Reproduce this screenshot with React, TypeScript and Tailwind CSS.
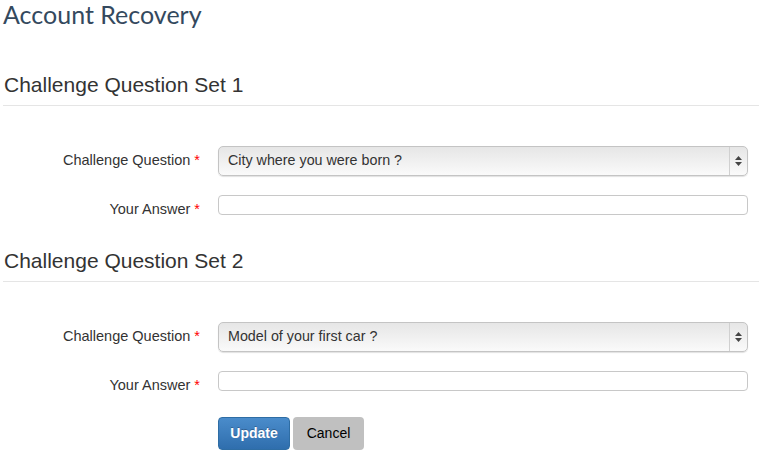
import React from "react";

function Req() {
    return <span className="text-[#ff0000] ml-[4px]">*</span>;
}

function FakeSelect({ value }: { value: string }) {
    return (
        <div className="flex-1 h-[30px] flex items-stretch rounded-[5px] border border-[#c4c4c4] bg-gradient-to-b from-[#e6e6e6] to-[#fafafa] shadow-[0_1px_1px_rgba(0,0,0,0.12)]">
            <div className="flex-1 flex items-center pl-[9px] text-[14.3px] text-[#333]">{value}</div>
            <div className="w-[18px] border-l border-[#d0d0d0] flex flex-col items-center justify-center gap-[2px]">
                <svg width="7" height="4" viewBox="0 0 7 4"><path d="M3.5 0L7 4H0Z" fill="#444" /></svg>
                <svg width="7" height="4" viewBox="0 0 7 4"><path d="M0 0H7L3.5 4Z" fill="#444" /></svg>
            </div>
        </div>
    );
}

function QuestionSet({ title, question }: { title: string; question: string }) {
    return (
        <div>
            <h2 className="text-[21px] leading-[22px] text-[#333] pl-[1px] pb-[9px] border-b border-[#e5e5e5]">{title}</h2>
            <div className="flex items-center mt-[40px] pr-[11px]">
                <label className="w-[198px] text-right text-[14.5px] text-[#333] pr-[1px]">
                    Challenge Question<Req />
                </label>
                <div className="ml-[17px] flex-1 flex">
                    <FakeSelect value={question} />
                </div>
            </div>
            <div className="flex items-start mt-[19px] pr-[11px]">
                <label className="w-[198px] text-right text-[14.5px] leading-[20px] pt-[4px] text-[#333] pr-[1px]">
                    Your Answer<Req />
                </label>
                <input className="ml-[17px] flex-1 h-[20px] rounded-[4px] border border-[#c8c8c8] bg-white outline-none" />
            </div>
        </div>
    );
}

export default function App() {
    return (
        <div className="w-[759px] h-[459px] bg-white pl-[3px] font-['Liberation_Sans',Arial,sans-serif]">
            <h1 className="text-[25px] leading-[28px] text-[#34495e] font-['Lato',sans-serif]">Account Recovery</h1>

            <div className="mt-[46px]">
                <QuestionSet title="Challenge Question Set 1" question="City where you were born ?" />
            </div>

            <div className="mt-[31px]">
                <QuestionSet title="Challenge Question Set 2" question="Model of your first car ?" />
            </div>

            <div className="flex gap-[3px] mt-[22px] ml-[215px]">
                <button className="w-[72px] h-[33px] rounded-[4px] border border-[#2e6da4] bg-gradient-to-b from-[#4a8ccb] to-[#2f6ead] text-white text-[14px] font-bold [text-shadow:0_-1px_0_rgba(0,0,0,0.25)]">
                    Update
                </button>
                <button className="w-[71px] h-[33px] rounded-[4px] bg-[#c0c0c0] text-black text-[14px]">
                    Cancel
                </button>
            </div>
        </div>
    );
}
